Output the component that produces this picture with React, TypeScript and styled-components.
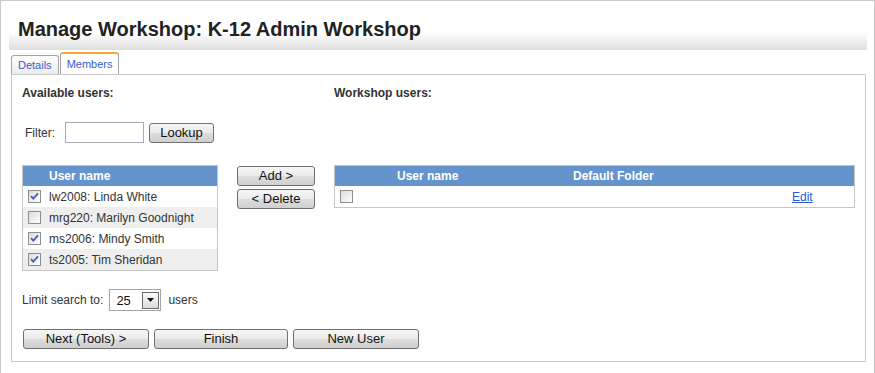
import React from 'react';
import styled, { createGlobalStyle } from 'styled-components';

const GlobalStyle = createGlobalStyle`
    html, body {
        margin: 0;
        padding: 0;
        background: #ffffff;
    }
    body {
        font-family: "Liberation Sans", Arial, sans-serif;
        color: #333333;
    }
`

const Page = styled.div`
    box-sizing: border-box;
    width: 875px;
    height: 373px;
    border: 1px solid #c9c9c9;
    border-bottom: none;
    padding: 0 7px 0 8px;
    overflow: hidden;
`

const Header = styled.div`
    height: 49px;
    box-sizing: border-box;
    padding: 16px 0 0 9px;
    background: linear-gradient(to bottom, #ffffff 0%, #ffffff 64%, #dedede 100%);
`

const Title = styled.h1`
    margin: 0;
    font-size: 20px;
    line-height: 24px;
    font-weight: bold;
    color: #222222;
`

const Tabs = styled.div`
    display: flex;
    align-items: flex-end;
    margin: 0 0 0 2px;
    height: 24px;
`

const Tab = styled.div<{ $active?: boolean }>`
    box-sizing: border-box;
    height: ${p => (p.$active ? '22px' : '19px')};
    padding: ${p => (p.$active ? '3px 6px 0 6px' : '2px 6px 0 6px')};
    font-size: 11px;
    line-height: 14px;
    color: #3a5bcf;
    border: 1px solid #a4a4a4;
    border-bottom: none;
    border-top: ${p => (p.$active ? '2px solid #f5a934' : '1px solid #a4a4a4')};
    border-radius: 3px 3px 0 0;
    background: ${p => (p.$active ? '#ffffff' : 'linear-gradient(to bottom, #ffffff 0%, #ececec 100%)')};
    margin-right: 1px;
`

const Panel = styled.div`
    box-sizing: border-box;
    margin-left: 2px;
    width: 855px;
    height: 288px;
    border: 1px solid #c9c9c9;
    padding: 11px 10px 0 10px;
`

const Columns = styled.div`
    display: grid;
    grid-template-columns: 312px 1fr;
`

const Column = styled.div`
    display: flex;
    flex-direction: column;
`

const SectionTitle = styled.div`
    font-size: 12px;
    line-height: 14px;
    font-weight: bold;
    color: #333333;
`

const FilterRow = styled.div`
    display: flex;
    align-items: center;
    margin-top: 22px;
    padding-left: 3px;
    height: 21px;
    font-size: 12px;
`

const Label = styled.span`
    font-size: 12px;
    color: #333333;
`

const TextInput = styled.input`
    box-sizing: border-box;
    width: 79px;
    height: 21px;
    margin: 0 5px 0 10px;
    border: 1px solid #a5acb5;
    padding: 0 3px;
    font-family: "Liberation Sans", Arial, sans-serif;
`

const Button = styled.button<{ $width: number }>`
    box-sizing: border-box;
    width: ${p => p.$width}px;
    height: 20px;
    padding: 0;
    border: 1px solid #707070;
    border-radius: 3px;
    background: linear-gradient(to bottom, #f6f6f6 0%, #ebebeb 48%, #dddddd 52%, #cfcfcf 100%);
    font-family: "Liberation Sans", Arial, sans-serif;
    font-size: 13px;
    line-height: 16px;
    color: #111111;
    text-align: center;
`

const ListRow = styled.div`
    display: flex;
    align-items: flex-start;
    margin-top: 22px;
`

const ButtonStack = styled.div`
    display: flex;
    flex-direction: column;
    gap: 3px;
    margin: 1px 0 0 19px;
`

const Table = styled.div<{ $width: number; $cols: string }>`
    box-sizing: border-box;
    width: ${p => p.$width}px;
    border: 1px solid #c6c6c6;
    display: grid;
    grid-template-columns: ${p => p.$cols};
    font-size: 12px;
`

const HeadCell = styled.div`
    height: 20px;
    line-height: 20px;
    background: #6594cd;
    color: #ffffff;
    font-weight: bold;
    white-space: nowrap;
`

const Cell = styled.div<{ $alt?: boolean }>`
    height: 21px;
    display: flex;
    align-items: center;
    background: ${p => (p.$alt ? '#eeeeee' : '#ffffff')};
    color: #333333;
    white-space: nowrap;
`

const Box = styled.span`
    box-sizing: border-box;
    display: inline-flex;
    align-items: center;
    justify-content: center;
    width: 13px;
    height: 13px;
    margin-left: 5px;
    border: 1px solid #8e8f8f;
    background: linear-gradient(135deg, #dcdcdc 0%, #f4f4f4 70%, #ffffff 100%);
`

const EditLink = styled.a`
    color: #2b5bd6;
    text-decoration: underline;
    font-size: 12px;
`

const LimitRow = styled.div`
    display: flex;
    align-items: center;
    margin-top: 18px;
    height: 22px;
`

const Select = styled.div`
    box-sizing: border-box;
    display: flex;
    align-items: center;
    justify-content: space-between;
    width: 52px;
    height: 22px;
    margin: 0 7px 0 6px;
    padding: 0 1px 0 6px;
    border: 1px solid #a5a5a5;
    font-size: 13px;
    color: #111111;
    background: #ffffff;
`

const SelectArrow = styled.span`
    box-sizing: border-box;
    display: flex;
    align-items: center;
    justify-content: center;
    width: 17px;
    height: 17px;
    border: 1px solid #6b6b6b;
    background: linear-gradient(to bottom, #fbfbfb 0%, #dcdcdc 100%);
`

const ActionRow = styled.div`
    display: flex;
    gap: 5px;
    margin: 18px 0 0 1px;
`

interface IUser {
    id: string;
    name: string;
    checked: boolean;
}

const users: IUser[] = [
    { id: 'lw2008', name: 'Linda White', checked: true },
    { id: 'mrg220', name: 'Marilyn Goodnight', checked: false },
    { id: 'ms2006', name: 'Mindy Smith', checked: true },
    { id: 'ts2005', name: 'Tim Sheridan', checked: true },
]

const Checkbox = ({ checked }: { checked: boolean }) => (
    <Box>
        {checked && (
            <svg width="9" height="9" viewBox="0 0 9 9">
                <path d="M1 4.2 L3.3 6.6 L8 1.4" fill="none" stroke="#4b5cb0" strokeWidth="1.8" />
            </svg>
        )}
    </Box>
)

const App = () => {
    return (
        <>
            <GlobalStyle />
            <Page>
                <Header>
                    <Title>Manage Workshop: K-12 Admin Workshop</Title>
                </Header>
                <Tabs>
                    <Tab>Details</Tab>
                    <Tab $active>Members</Tab>
                </Tabs>
                <Panel>
                    <Columns>
                        <Column>
                            <SectionTitle>Available users:</SectionTitle>
                            <FilterRow>
                                <Label>Filter:</Label>
                                <TextInput />
                                <Button $width={65}>Lookup</Button>
                            </FilterRow>
                            <ListRow>
                                <Table $width={196} $cols="26px 1fr">
                                    <HeadCell />
                                    <HeadCell>User name</HeadCell>
                                    {users.map((u, i) => (
                                        <React.Fragment key={u.id}>
                                            <Cell $alt={i % 2 === 1}>
                                                <Checkbox checked={u.checked} />
                                            </Cell>
                                            <Cell $alt={i % 2 === 1}>{u.id}: {u.name}</Cell>
                                        </React.Fragment>
                                    ))}
                                </Table>
                                <ButtonStack>
                                    <Button $width={78}>Add &gt;</Button>
                                    <Button $width={78}>&lt; Delete</Button>
                                </ButtonStack>
                            </ListRow>
                        </Column>
                        <Column>
                            <SectionTitle>Workshop users:</SectionTitle>
                            <Table $width={521} $cols="62px 176px 1fr 62px" style={{ marginTop: 65 }}>
                                <HeadCell />
                                <HeadCell>User name</HeadCell>
                                <HeadCell>Default Folder</HeadCell>
                                <HeadCell />
                                <Cell><Checkbox checked={false} /></Cell>
                                <Cell />
                                <Cell />
                                <Cell><EditLink href="#">Edit</EditLink></Cell>
                            </Table>
                        </Column>
                    </Columns>
                    <LimitRow>
                        <Label>Limit search to:</Label>
                        <Select>
                            <span>25</span>
                            <SelectArrow>
                                <svg width="7" height="4" viewBox="0 0 7 4">
                                    <path d="M0 0 H7 L3.5 4 Z" fill="#111" />
                                </svg>
                            </SelectArrow>
                        </Select>
                        <Label>users</Label>
                    </LimitRow>
                    <ActionRow>
                        <Button $width={126}>Next (Tools) &gt;</Button>
                        <Button $width={134}>Finish</Button>
                        <Button $width={126}>New User</Button>
                    </ActionRow>
                </Panel>
            </Page>
        </>
    );
};

export default App;
